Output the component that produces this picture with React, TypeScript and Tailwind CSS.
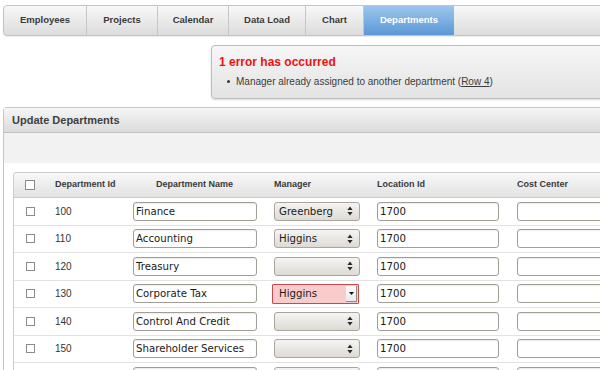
import React from "react";

const tabs = [
  { label: "Employees", w: "w-[83px]" },
  { label: "Projects", w: "w-[71px]" },
  { label: "Calendar", w: "w-[71px]" },
  { label: "Data Load", w: "w-[77px]" },
  { label: "Chart", w: "w-[58px]" },
];

const rows = [
  { id: "100", name: "Finance", mgr: "Greenberg", loc: "1700" },
  { id: "110", name: "Accounting", mgr: "Higgins", loc: "1700" },
  { id: "120", name: "Treasury", mgr: "", loc: "1700" },
  { id: "130", name: "Corporate Tax", mgr: "Higgins", loc: "1700", err: true },
  { id: "140", name: "Control And Credit", mgr: "", loc: "1700" },
  { id: "150", name: "Shareholder Services", mgr: "", loc: "1700" },
  { id: "", name: "", mgr: "", loc: "" },
];

function Arrows() {
  return (
    <svg width="6" height="10" viewBox="0 0 6 10" className="shrink-0">
      <path d="M3 0.5 L5.6 4 L0.4 4 Z" fill="#2a2a2a" />
      <path d="M3 9.5 L5.6 6 L0.4 6 Z" fill="#2a2a2a" />
    </svg>
  );
}

function Select({ value, err }: { value: string; err?: boolean }) {
  if (err) {
    return (
      <div className="flex h-[20px] w-[87px] items-center justify-between rounded-[1px] border border-[#c94a4a] bg-[#f9cbcb] pl-[6px] pr-[1px]">
        <span className="font-['DejaVu_Sans',sans-serif] text-[10.2px] text-[#1a1a1a]">{value}</span>
        <div className="flex h-[16px] w-[11px] items-center justify-center border-r border-b border-[#8c8c8c] bg-linear-to-b from-[#fdfdfd] to-[#e9e9e9]">
          <svg width="5" height="3" viewBox="0 0 5 3">
            <path d="M0 0 L5 0 L2.5 3 Z" fill="#111" />
          </svg>
        </div>
      </div>
    );
  }
  return (
    <div className="flex h-[19px] w-[86px] items-center justify-between rounded-[3px] border border-[#aaa69e] bg-linear-to-b from-[#f5f4f2] to-[#dedbd5] pl-[4px] pr-[6px]">
      <span className="font-['DejaVu_Sans',sans-serif] text-[10.2px] text-[#1a1a1a]">{value}</span>
      <Arrows />
    </div>
  );
}

function TextBox({ value, w }: { value: string; w: string }) {
  return (
    <div
      className={`flex h-[19px] ${w} items-center rounded-[3px] border border-[#a29e96] bg-white pl-[2px] font-['DejaVu_Sans',sans-serif] text-[10.2px] text-[#1a1a1a] shadow-[inset_0_1px_1px_rgba(0,0,0,0.08)]`}
    >
      {value}
    </div>
  );
}

function Check({ big }: { big?: boolean }) {
  return (
    <div
      className={`${big ? "h-[10px] w-[10px]" : "h-[9px] w-[9px]"} border border-[#8a8a8a] bg-white`}
    />
  );
}

export default function App() {
  return (
    <div className="h-[370px] w-[600px] overflow-hidden bg-white font-['Liberation_Sans',Arial,sans-serif]">
      {/* Tab bar */}
      <div className="ml-[3px] mt-[5px] flex h-[31px] w-[620px] rounded-l-[4px] border border-[#c4c4c4] bg-linear-to-b from-[#f8f8f8] to-[#dcdcdc] shadow-[0_1px_1px_rgba(0,0,0,0.08)]">
        {tabs.map((t) => (
          <div
            key={t.label}
            className={`${t.w} flex items-center justify-center border-r border-[#c6c6c6] text-[9.5px] font-bold text-[#3a3a3a]`}
          >
            {t.label}
          </div>
        ))}
        <div className="flex w-[90px] items-center justify-center bg-linear-to-b from-[#9cc6ee] to-[#5c98d7] text-[9.5px] font-bold text-white">
          Departments
        </div>
      </div>

      {/* Error box */}
      <div className="ml-[211px] mt-[9px] h-[54px] w-[420px] rounded-[4px] border border-[#bcbcbc] bg-linear-to-b from-[#f6f6f6] to-[#e3e3e3] pl-[7px] pt-[9px] shadow-[0_1px_2px_rgba(0,0,0,0.15)]">
        <div className="text-[12px] font-bold leading-[14px] text-[#ee1111]">1 error has occurred</div>
        <div className="mt-[6px] flex items-center pl-[8px] text-[10px] leading-[13px] text-[#3c3c3c]">
          <span className="mr-[6px] inline-block h-[3px] w-[3px] rounded-full bg-[#333]" />
          <span>
            Manager already assigned to another department (<span className="underline">Row 4</span>)
          </span>
        </div>
      </div>

      {/* Region */}
      <div className="ml-[3px] mt-[8px] w-[640px] rounded-tl-[4px] border-l border-t border-[#c6c6c6]">
        <div className="flex h-[25px] items-center border-b border-[#c2c2c2] bg-linear-to-b from-[#f6f6f6] to-[#dbdbdb] pl-[8px] text-[11px] font-bold text-[#404040]">
          Update Departments
        </div>
        <div className="h-[30px] bg-[#f2f2f2]" />
        <div className="bg-white pl-[9px] pt-[9px]">
          <div className="rounded-tl-[4px] border-l border-t border-[#cdcdcd]">
            {/* header */}
            <div className="grid h-[25px] grid-cols-[31px_80px_140px_103px_140px_200px] items-center rounded-tl-[4px] border-b border-[#cacaca] bg-linear-to-b from-[#f8f8f8] to-[#e2e2e2] text-[9px] font-bold text-[#3a3a3a]">
              <div className="pl-[11px]">
                <Check big />
              </div>
              <div className="pl-[10px]">Department Id</div>
              <div className="pl-[8px]">
                <div className="w-[123px] text-center">Department Name</div>
              </div>
              <div className="pl-[9px]">Manager</div>
              <div className="pl-[9px]">Location Id</div>
              <div className="pl-[9px]">Cost Center</div>
            </div>
            {rows.map((r, i) => (
              <div
                key={i}
                className="grid h-[27.5px] grid-cols-[31px_80px_140px_103px_140px_200px] items-center border-b border-[#e2e2e2]"
              >
                <div className="pl-[12px]">
                  <Check />
                </div>
                <div className="pl-[10px] text-[10px] text-[#333]">{r.id}</div>
                <div className="pl-[8px]">
                  <TextBox value={r.name} w="w-[124px]" />
                </div>
                <div className={r.err ? "pl-[7px]" : "pl-[9px]"}>
                  <Select value={r.mgr} err={r.err} />
                </div>
                <div className="pl-[9px]">
                  <TextBox value={r.loc} w="w-[122px]" />
                </div>
                <div className="pl-[9px]">
                  <TextBox value="" w="w-[150px]" />
                </div>
              </div>
            ))}
          </div>
        </div>
      </div>
    </div>
  );
}
